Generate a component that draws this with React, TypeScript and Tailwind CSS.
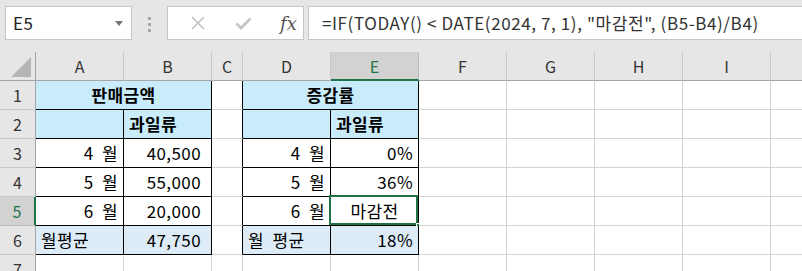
import React from 'react';

const FONT = '"Noto Sans CJK KR", "Noto Sans", sans-serif';

const COLS = ['A', 'B', 'C', 'D', 'E', 'F', 'G', 'H', 'I', 'J'];
const WIDTHS = [88, 88, 31, 88, 88, 88, 88, 88, 88, 88];

type Cell = {
  text?: string;
  align?: 'left' | 'right' | 'center' | 'num';
  bold?: boolean;
  bg?: string;
  span?: number;
  black?: boolean;
  selected?: boolean;
};

const HEAD = 'bg-[#c9ecfa]';
const AVG = 'bg-[#ddebf7]';

// rows 1..7, only the first six hold data
const DATA: Record<number, Record<string, Cell>> = {
  1: {
    A: { text: '판매금액', align: 'center', bold: true, bg: HEAD, span: 2, black: true },
    D: { text: '증감률', align: 'center', bold: true, bg: HEAD, span: 2, black: true },
  },
  2: {
    A: { bg: HEAD, black: true },
    B: { text: '과일류', bold: true, bg: HEAD, black: true },
    D: { bg: HEAD, black: true },
    E: { text: '과일류', bold: true, bg: HEAD, black: true },
  },
  3: {
    A: { text: '4  월', align: 'right', black: true },
    B: { text: '40,500', align: 'num', black: true },
    D: { text: '4  월', align: 'right', black: true },
    E: { text: '0%', align: 'right', black: true },
  },
  4: {
    A: { text: '5  월', align: 'right', black: true },
    B: { text: '55,000', align: 'num', black: true },
    D: { text: '5  월', align: 'right', black: true },
    E: { text: '36%', align: 'right', black: true },
  },
  5: {
    A: { text: '6  월', align: 'right', black: true },
    B: { text: '20,000', align: 'num', black: true },
    D: { text: '6  월', align: 'right', black: true },
    E: { text: '마감전', align: 'center', black: true, selected: true },
  },
  6: {
    A: { text: '월평균', bg: AVG, black: true },
    B: { text: '47,750', align: 'num', bg: AVG, black: true },
    D: { text: '월  평균', bg: AVG, black: true },
    E: { text: '18%', align: 'right', bg: AVG, black: true },
  },
};

function Toolbar() {
  return (
    <div className="flex h-[52px] items-start bg-[#e6e6e6] pt-[6px]">
      <div className="ml-[5px] flex h-[34px] w-[127px] items-center justify-between border border-[#c6c6c6] bg-white pl-[7px] pr-[8px]">
        <span className="text-[17px] tracking-[0.5px] text-[#222]">E5</span>
        <svg width="8" height="5" viewBox="0 0 8 5">
          <path d="M0 0h8L4 5z" fill="#777" />
        </svg>
      </div>
      <div className="ml-[16px] mr-[16px] mt-[11px] flex flex-col gap-[3px]">
        <div className="h-[3px] w-[3px] bg-[#a8a8a8]" />
        <div className="h-[3px] w-[3px] bg-[#a8a8a8]" />
        <div className="h-[3px] w-[3px] bg-[#a8a8a8]" />
      </div>
      <div className="flex h-[34px] w-[137px] items-center border border-[#c6c6c6] bg-white">
        <svg className="ml-[23px]" width="14" height="14" viewBox="0 0 14 14">
          <path d="M1 1l12 12M13 1L1 13" stroke="#c4c4c4" strokeWidth="1.7" />
        </svg>
        <svg className="ml-[30px]" width="17" height="13" viewBox="0 0 17 13">
          <path d="M1.5 6.5l4.5 4.5L15.5 1.5" stroke="#c4c4c4" strokeWidth="2.8" fill="none" />
        </svg>
        <span
          className="ml-[28px] text-[18px] italic text-[#555]"
          style={{ fontFamily: '"DejaVu Serif", "Liberation Serif", serif' }}
        >
          fx
        </span>
      </div>
      <div className="ml-[4px] flex h-[34px] flex-1 items-center border border-r-0 border-[#c6c6c6] bg-white pl-[13px]">
        <span className="whitespace-pre text-[17px] tracking-[0.6px] text-[#333]">
          {'=IF(TODAY() < DATE(2024, 7, 1), "마감전", (B5-B4)/B4)'}
        </span>
      </div>
    </div>
  );
}

function ColumnHeaders() {
  return (
    <div className="flex h-[29px]">
      <div className="relative w-[36px] shrink-0 border-b border-r border-[#a6a6a6] bg-[#e6e6e6]">
        <svg className="absolute bottom-[3px] right-[4px]" width="20" height="20" viewBox="0 0 20 20">
          <path d="M20 0V20H0z" fill="#b5b5b5" />
        </svg>
      </div>
      {COLS.map((c, i) => {
        const sel = c === 'E';
        return (
          <div
            key={c}
            style={{ width: WIDTHS[i] }}
            className={
              sel
                ? 'flex shrink-0 items-center justify-center border-b-2 border-r border-b-[#217346] border-r-[#bdbdbd] bg-[#d2d2d2] text-[16px] text-[#217346]'
                : 'flex shrink-0 items-center justify-center border-b border-r border-b-[#a6a6a6] border-r-[#c8c8c8] bg-[#e6e6e6] text-[16px] text-[#333]'
            }
          >
            {c === 'J' ? '' : c}
          </div>
        );
      })}
    </div>
  );
}

function Row({ n }: { n: number }) {
  const row = DATA[n] || {};
  const sel = n === 5;
  const cells: React.ReactNode[] = [];
  for (let i = 0; i < COLS.length; i++) {
    const c = COLS[i];
    const cell = row[c] || {};
    const span = cell.span || 1;
    let w = 0;
    for (let k = 0; k < span; k++) w += WIDTHS[i + k];
    const last = COLS[i + span - 1];
    // black right edge for table cells, and for C which borders the D table
    const rightBlack = cell.black || (last === 'C' && n <= 6);
    const bottomBlack = cell.black;
    const justify =
      cell.align === 'right'
        ? 'justify-end pr-[5px]'
        : cell.align === 'num'
          ? 'justify-end pr-[10px]'
          : cell.align === 'center'
            ? 'justify-center'
            : 'justify-start pl-[5px]';
    cells.push(
      <div
        key={c}
        style={{ width: w }}
        className={[
          'relative flex shrink-0 items-center border-b border-r text-[17px] text-black',
          rightBlack ? 'border-r-black' : 'border-r-[#d4d4d4]',
          bottomBlack ? 'border-b-black' : 'border-b-[#d4d4d4]',
          cell.bg || 'bg-white',
          justify,
          cell.bold ? 'font-bold' : '',
        ].join(' ')}
      >
        <span className="whitespace-pre tracking-[0.4px]">{cell.text}</span>
        {cell.selected && (
          <>
            <div className="pointer-events-none absolute left-[-2px] top-[-2px] h-[30px] w-[89px] border-2 border-[#217346]" />
            <div className="absolute bottom-[-4px] right-[-4px] h-[6px] w-[6px] border border-white bg-[#217346]" />
          </>
        )}
      </div>
    );
    i += span - 1;
  }
  return (
    <div className="flex h-[29px]">
      <div
        className={
          sel
            ? 'flex w-[36px] shrink-0 items-center justify-center border-b border-r-2 border-b-[#bdbdbd] border-r-[#217346] bg-[#d2d2d2] text-[16px] text-[#217346]'
            : 'flex w-[36px] shrink-0 items-center justify-center border-b border-r border-b-[#c8c8c8] border-r-[#a6a6a6] bg-[#e6e6e6] text-[16px] text-[#333]'
        }
      >
        {n}
      </div>
      {cells}
    </div>
  );
}

export default function App() {
  return (
    <div className="h-[271px] w-[802px] overflow-hidden bg-white" style={{ fontFamily: FONT }}>
      <Toolbar />
      <ColumnHeaders />
      {[1, 2, 3, 4, 5, 6, 7].map((n) => (
        <Row key={n} n={n} />
      ))}
    </div>
  );
}
